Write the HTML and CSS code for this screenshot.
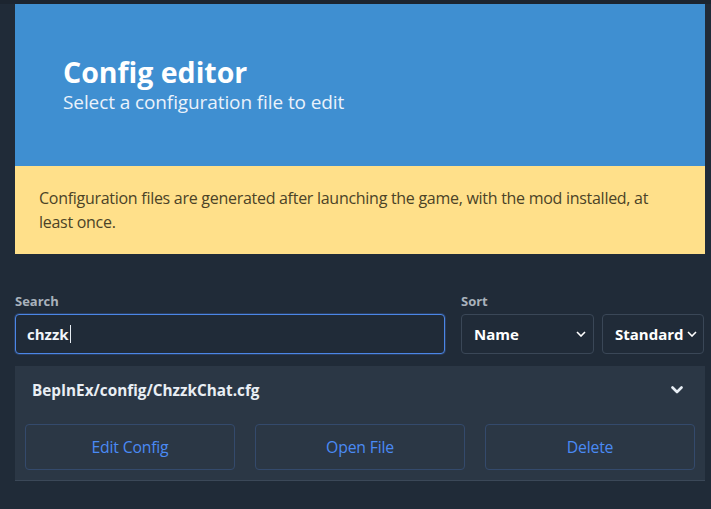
FILE: index.html
```html
<!DOCTYPE html>
<html>
<head>
<meta charset="utf-8">
<link rel="stylesheet" href="styles.css">
</head>
<body>
<div class="topstrip"></div>
<main class="page">
  <section class="hero">
    <h1 class="hero-title">Config editor</h1>
    <p class="hero-subtitle">Select a configuration file to edit</p>
  </section>
  <section class="notice">
    <p>Configuration files are generated after launching the game, with the mod installed, at least once.</p>
  </section>
  <section class="filters">
    <div class="field field-search">
      <label class="label">Search</label>
      <div class="input"><span class="input-text">chzzk</span><span class="caret"></span></div>
    </div>
    <div class="field field-sort">
      <label class="label">Sort</label>
      <div class="selects">
        <div class="select select-name"><span>Name</span><svg class="chev" viewBox="0 0 10 6" width="10" height="6"><path d="M1 1l4 4 4-4" fill="none" stroke="#fff" stroke-width="1.6"/></svg></div>
        <div class="select select-order"><span>Standard</span><svg class="chev" viewBox="0 0 10 6" width="10" height="6"><path d="M1 1l4 4 4-4" fill="none" stroke="#fff" stroke-width="1.6"/></svg></div>
      </div>
    </div>
  </section>
  <section class="card">
    <div class="card-header">
      <span class="card-title">BepInEx/config/ChzzkChat.cfg</span>
      <svg class="card-chev" viewBox="0 0 12 8" width="12" height="8"><path d="M1.5 1.5l4.5 4.5 4.5-4.5" fill="none" stroke="#e8eef5" stroke-width="2.6" stroke-linecap="round" stroke-linejoin="round"/></svg>
    </div>
    <div class="card-actions">
      <button class="btn">Edit Config</button>
      <button class="btn">Open File</button>
      <button class="btn">Delete</button>
    </div>
  </section>
</main>
</body>
</html>
```

FILE: styles.css
```css
html, body {
  margin: 0;
  padding: 0;
}
body {
  background: #202b38;
  font-family: "Open Sans", "Noto Sans", sans-serif;
  color: #fff;
  width: 711px;
  height: 509px;
  overflow: hidden;
}
.topstrip {
  height: 4px;
  background: #1c2530;
}
.page {
  padding: 0 6px 0 15px;
}
.hero {
  background: #3f8fd1;
  padding: 51px 48px 0;
  height: 111px;
}
.hero-title {
  margin: 0;
  font-size: 28.5px;
  font-weight: 700;
  line-height: 34px;
}
.hero-subtitle {
  margin: 0;
  font-size: 19px;
  line-height: 26px;
  color: #eaf2fb;
  letter-spacing: -0.1px;
}
.notice {
  background: #ffe08a;
  padding: 20px 24px;
  height: 48px;
}
.notice p {
  margin: 0;
  font-size: 16px;
  line-height: 24px;
  color: #4b4327;
  letter-spacing: -0.28px;
}
.filters {
  display: flex;
  gap: 16px;
  margin-top: 39px;
}
.field-search {
  width: 430px;
}
.label {
  display: block;
  font-size: 13px;
  font-weight: 700;
  color: #a9b2bc;
  line-height: 16px;
  margin-bottom: 5px;
}
.input {
  height: 38px;
  border: 1px solid #4b86e6;
  border-radius: 4px;
  box-shadow: 0 0 0 1px rgba(72,120,210,0.25);
  background: #202b38;
  display: flex;
  align-items: center;
  padding-left: 11px;
}
.input-text {
  font-size: 15px;
  font-weight: 700;
  color: #f1f5fa;
}
.caret {
  width: 1px;
  height: 18px;
  background: #e6ecf2;
  margin-left: 1px;
}
.selects {
  display: flex;
  gap: 8px;
}
.select {
  height: 38px;
  border: 1px solid #3a4757;
  border-radius: 4px;
  display: flex;
  align-items: center;
  justify-content: space-between;
  padding: 0 7px 0 12px;
  font-size: 15px;
  font-weight: 700;
  color: #fff;
  box-sizing: content-box;
}
.select-name {
  width: 112px;
}
.select-order {
  width: 82px;
  padding-left: 12px;
  padding-right: 6px;
}
.card {
  margin-top: 12px;
  background: #2b3745;
  border-bottom: 1px solid #3b4858;
  height: 114px;
}
.card-header {
  height: 48px;
  display: flex;
  align-items: center;
  justify-content: space-between;
  padding: 0 22px 0 17px;
}
.card-title {
  font-size: 15.3px;
  font-weight: 700;
  color: #e9eef4;
}
.card-actions {
  display: flex;
  gap: 20px;
  padding: 10px 10px 0;
}
.btn {
  width: 210px;
  height: 46px;
  background: transparent;
  border: 1px solid #344a6c;
  border-radius: 4px;
  color: #4a8af4;
  font-family: "Open Sans", "Noto Sans", sans-serif;
  font-size: 15.8px;
  letter-spacing: -0.2px;
  padding: 0;
}
```
